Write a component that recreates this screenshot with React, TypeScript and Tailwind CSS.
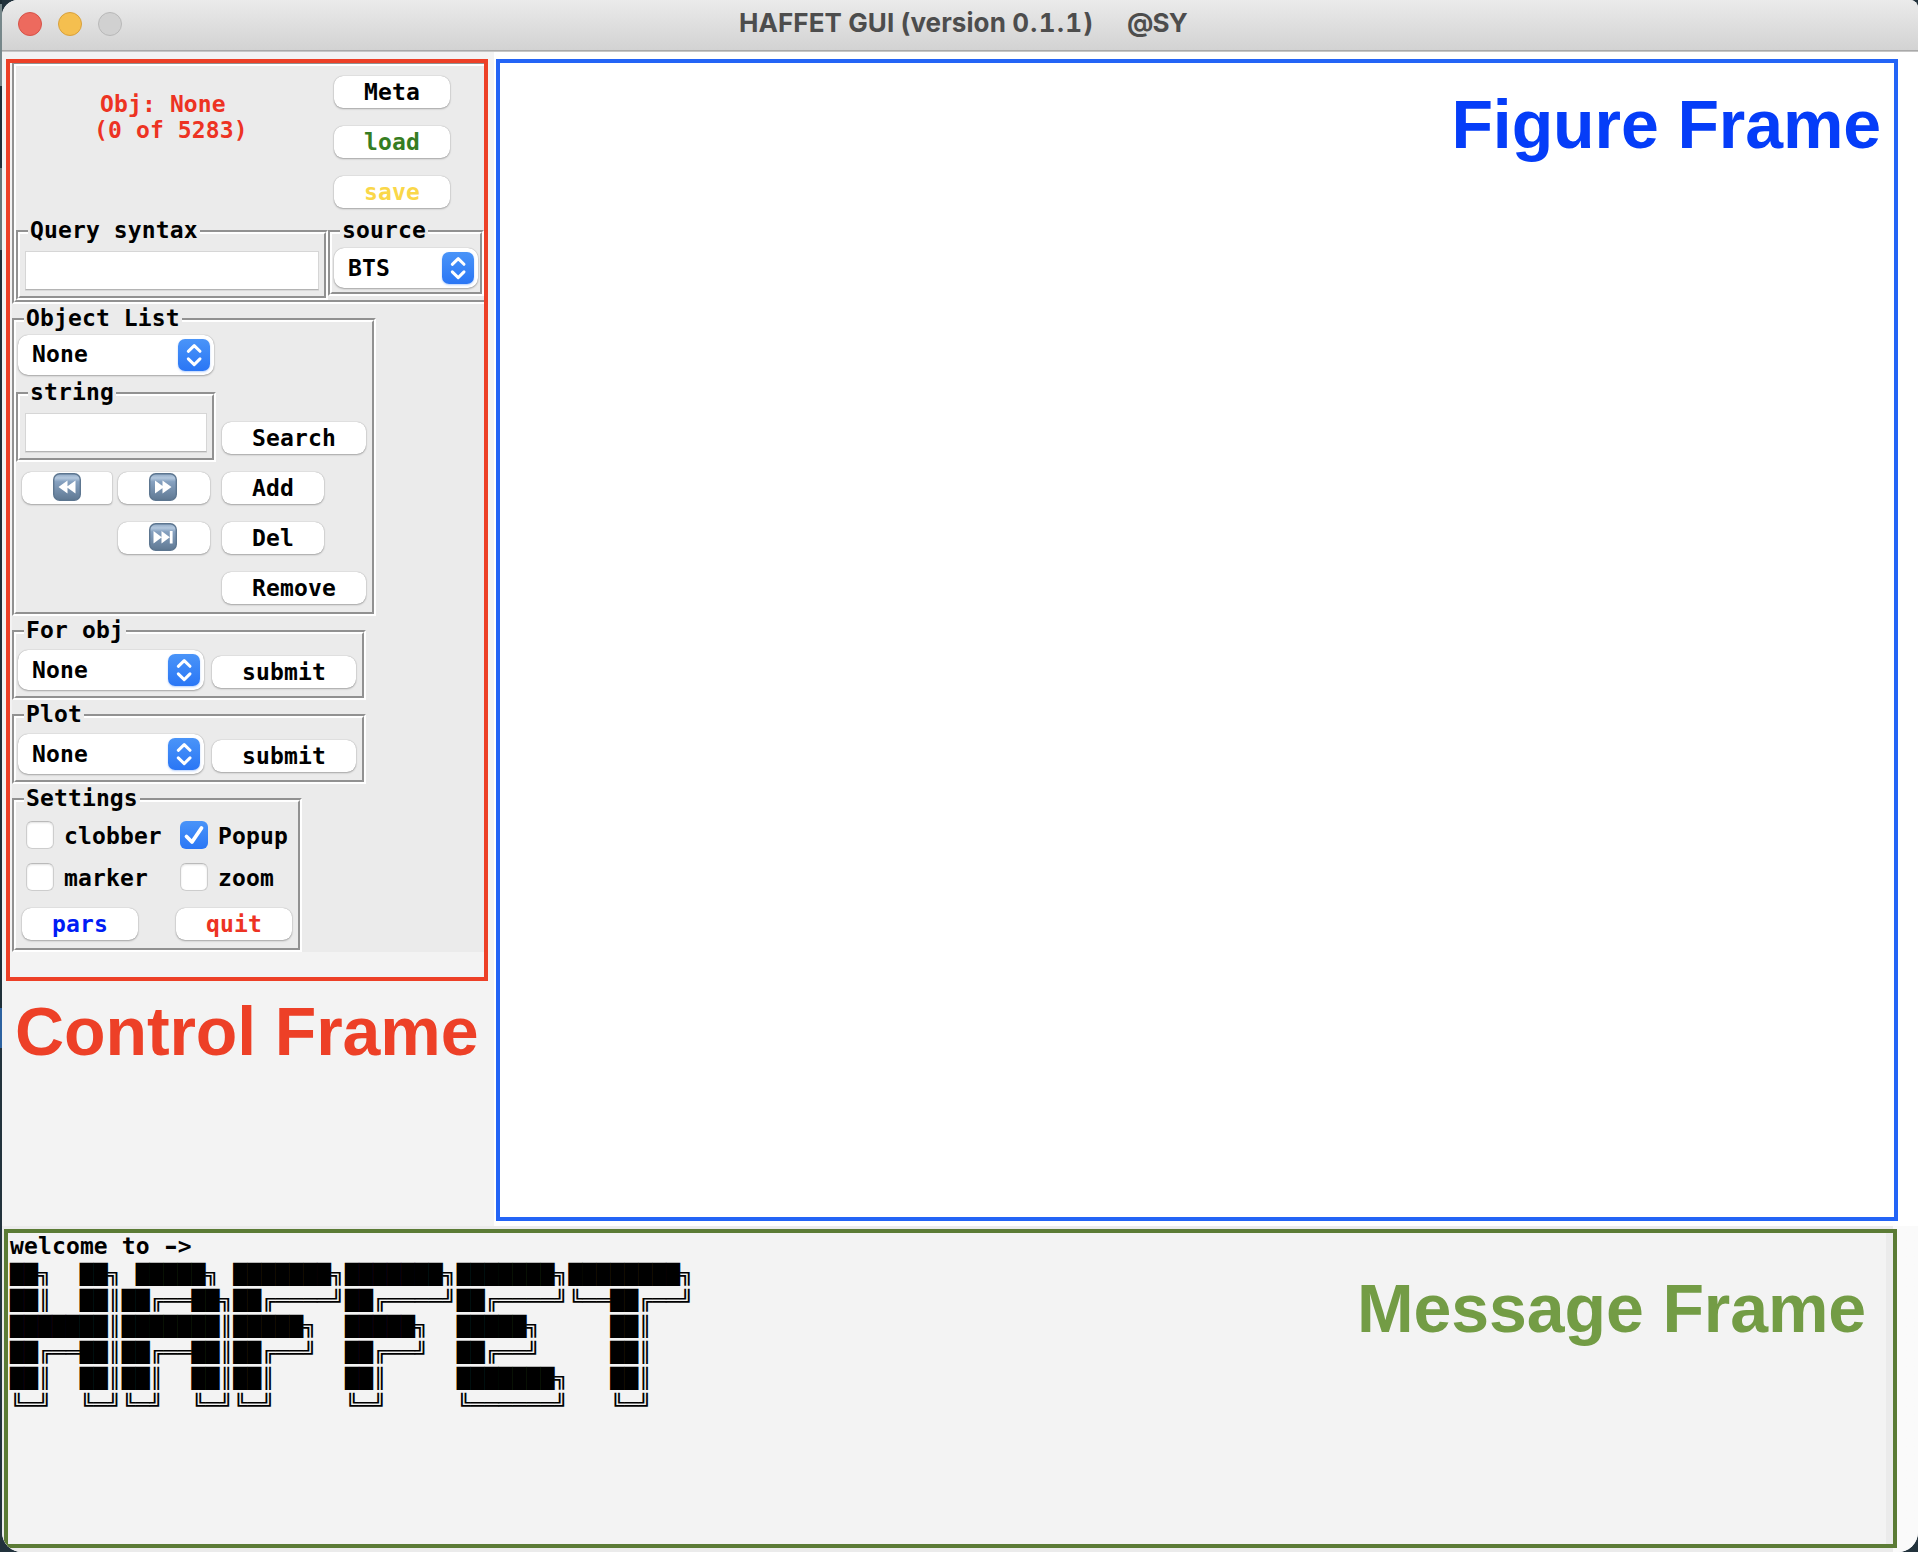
import type { ReactNode } from "react";

const LOGO = [
  "██╗  ██╗ █████╗ ███████╗███████╗███████╗████████╗",
  "██║  ██║██╔══██╗██╔════╝██╔════╝██╔════╝╚══██╔══╝",
  "███████║███████║█████╗  █████╗  █████╗     ██║",
  "██╔══██║██╔══██║██╔══╝  ██╔══╝  ██╔══╝     ██║",
  "██║  ██║██║  ██║██║     ██║     ███████╗   ██║",
  "╚═╝  ╚═╝╚═╝  ╚═╝╚═╝     ╚═╝     ╚══════╝   ╚═╝",
].join("\n");

/* Tk-style grooved frame: grey/white double line with an optional caption on the top edge. */
function Groove({ label, className = "", children }: { label?: string; className?: string; children?: ReactNode }) {
  return (
    <div className={`relative shrink-0 border-2 border-t-[#919191] border-l-[#919191] border-r-white border-b-white ${className}`}>
      <div className="h-full border-2 border-t-white border-l-white border-r-[#919191] border-b-[#919191]">{children}</div>
      {label && (
        <span className="absolute -top-[14px] left-[10px] h-[24px] bg-[#ebebeb] px-[2px] leading-[24px]">{label}</span>
      )}
    </div>
  );
}

function Btn({ className = "", children }: { className?: string; children?: ReactNode }) {
  return (
    <button
      className={`flex h-8 shrink-0 items-center justify-center rounded-[9px] bg-white shadow-[0_0_1px_rgba(0,0,0,0.35),0_1px_2px_rgba(0,0,0,0.28)] ${className}`}
    >
      {children}
    </button>
  );
}

function Select({ value, className = "" }: { value: string; className?: string }) {
  return (
    <div
      className={`flex h-10 shrink-0 items-center justify-between rounded-[10px] bg-white pr-1 pl-[14px] shadow-[0_0_1px_rgba(0,0,0,0.35),0_1px_2px_rgba(0,0,0,0.28)] ${className}`}
    >
      <span>{value}</span>
      <span className="h-8 w-8 rounded-[7px] bg-linear-to-b from-[#4a94f8] to-[#2a76f5] shadow-[0_1px_2px_rgba(42,118,245,0.35)]">
        <svg viewBox="0 0 32 32" className="h-8 w-8" fill="none" stroke="white" strokeWidth="3" strokeLinecap="round" strokeLinejoin="round">
          <path d="M10.3 12.3 L16.2 6.6 L22 12.3 M10.3 19.9 L16.2 25.6 L22 19.9" />
        </svg>
      </span>
    </div>
  );
}

function Entry({ className = "" }: { className?: string }) {
  return <div className={`h-[39px] border border-[#d6d6d6] border-b-[#b4b4b4] bg-white shadow-[0_1px_0_#d9d9d9] ${className}`} />;
}

function Check({ label, checked = false }: { label: string; checked?: boolean }) {
  return (
    <label className="flex h-[28px] items-center">
      {checked ? (
        <svg viewBox="0 0 28 28" className="h-7 w-7 rounded-[6px] bg-linear-to-b from-[#4a94f8] to-[#2a76f5]" fill="none" stroke="white" strokeWidth="3.8" strokeLinecap="round" strokeLinejoin="round">
          <path d="M6.5 15.5 L12 21 L21.5 7" />
        </svg>
      ) : (
        <span className="h-7 w-7 rounded-[6px] border border-[#cdcdcd] border-t-[#bababa] bg-white shadow-[inset_0_1px_2px_rgba(0,0,0,0.12)]" />
      )}
      <span className="mt-[3px] ml-[10px]">{label}</span>
    </label>
  );
}

/* Blue-grey media key glyph. */
function MediaKey({ kind }: { kind: "rewind" | "forward" | "next" }) {
  const paths = {
    rewind: "M14.5 7.5 V20.5 L5.5 14 Z M22.5 7.5 V20.5 L13.5 14 Z",
    forward: "M6 7.5 V20.5 L15 14 Z M13.5 7.5 V20.5 L22.5 14 Z",
    next: "M4.5 8 V20.5 L12.8 14.2 Z M12.5 8 V20.5 L20.8 14.2 Z M20.8 8 H23.6 V20.5 H20.8 Z",
  };
  return (
    <svg viewBox="0 0 28 28" className="-mt-[2px] h-7 w-7">
      <defs>
        <linearGradient id={`key-${kind}`} x1="0" y1="0" x2="0" y2="1">
          <stop offset="0" stopColor="#8fa9c6" />
          <stop offset="0.16" stopColor="#b4c8de" />
          <stop offset="0.3" stopColor="#86a1c0" />
          <stop offset="1" stopColor="#5f7892" />
        </linearGradient>
      </defs>
      <rect x="0.7" y="0.7" width="26.6" height="26.6" rx="6" fill={`url(#key-${kind})`} stroke="#5d7690" strokeWidth="1.4" />
      <path d={paths[kind]} fill="white" />
    </svg>
  );
}

function ControlFrame() {
  return (
    <div className="ml-[4px] h-[922px] w-[482px] shrink-0 overflow-hidden border-4 border-[#ed4027] pl-[2px]">
      <div className="flex h-[889px] w-[480px] flex-col items-start bg-[#ebebeb]">
        <Groove className="-mt-px h-[242px] w-[484px]">
          <div className="flex h-[164px]">
            <div className="w-[318px] pt-[25px] leading-[26px] text-[#ed3323]">
              <div className="pl-[84px]">Obj: None</div>
              <div className="pl-[78px]">(0 of 5283)</div>
            </div>
            <div className="flex flex-col gap-[18px] pt-[10px]">
              <Btn className="w-[116px]">Meta</Btn>
              <Btn className="w-[116px] text-[#367d22]">load</Btn>
              <Btn className="w-[116px] text-[#fad749]">save</Btn>
            </div>
          </div>
          <div className="flex items-start">
            <Groove label="Query syntax" className="h-[70px] w-[312px]">
              <Entry className="mt-[17px] ml-[5px] w-[294px]" />
            </Groove>
            <Groove label="source" className="h-[66px] w-[156px]">
              <Select value="BTS" className="mt-[14px] ml-[2px] w-[144px]" />
            </Groove>
          </div>
        </Groove>

        <Groove label="Object List" className="mt-[14px] h-[298px] w-[364px]">
          <div className="flex">
            <div className="w-[206px]">
              <Select value="None" className="mt-[13px] ml-[2px] w-[196px] pb-px" />
              <Groove label="string" className="mt-[17px] h-[70px] w-[200px]">
                <Entry className="mt-[17px] ml-[5px] w-[182px]" />
              </Groove>
              <div className="mt-[10px] flex gap-[6px] pl-[6px]">
                <Btn className="w-[90px] rounded-r-[4px]"><MediaKey kind="rewind" /></Btn>
                <Btn className="w-[92px] pr-[2px]"><MediaKey kind="forward" /></Btn>
              </div>
              <div className="mt-[18px] pl-[102px]">
                <Btn className="w-[92px] pr-[2px]"><MediaKey kind="next" /></Btn>
              </div>
            </div>
            <div className="flex flex-col gap-[18px] pt-[100px]">
              <Btn className="w-[144px]">Search</Btn>
              <Btn className="w-[102px]">Add</Btn>
              <Btn className="w-[102px]">Del</Btn>
              <Btn className="w-[144px]">Remove</Btn>
            </div>
          </div>
        </Groove>

        {["For obj", "Plot"].map((name) => (
          <Groove key={name} label={name} className="mt-[14px] h-[70px] w-[354px]">
            <div className="flex pl-[2px]">
              <Select value="None" className="mt-[16px] w-[186px]" />
              <Btn className="mt-[22px] ml-2 w-[144px]">submit</Btn>
            </div>
          </Groove>
        ))}

        <Groove label="Settings" className="mt-[14px] h-[154px] w-[290px]">
          <div className="grid grid-cols-[154px_1fr] gap-y-[14px] pt-[19px] pl-[10px]">
            <Check label="clobber" />
            <Check label="Popup" checked />
            <Check label="marker" />
            <Check label="zoom" />
          </div>
          <div className="mt-[17px] flex gap-[38px] pl-[6px]">
            <Btn className="w-[116px] text-[#001cf5]">pars</Btn>
            <Btn className="w-[116px] text-[#ed3323]">quit</Btn>
          </div>
        </Groove>
      </div>
    </div>
  );
}

export default function App() {
  return (
    <div className="flex h-[1552px] w-[1918px] overflow-hidden bg-[#22323c] font-['DejaVu_Sans_Mono',monospace] text-[23px] font-bold tracking-[0.13px] text-black">
      {/* Sliver of the desktop behind the window */}
      <div className="flex w-[2px] shrink-0 flex-col">
        <div className="h-1 bg-[#1c2b33]" />
        <div className="h-[82px] bg-[#76878a]" />
        <div className="h-[82px] bg-[#1f3039]" />
        <div className="h-[82px] bg-[#66787b]" />
        <div className="h-[758px] bg-[#1f3039]" />
        <div className="h-10 bg-[#2c62a0]" />
        <div className="flex-1 bg-[#22323c]" />
      </div>

      <div className="flex w-[1916px] flex-col overflow-hidden rounded-tl-[16px] rounded-tr-[8px] rounded-b-[20px] bg-white">
        <header className="flex h-[52px] shrink-0 items-start border-b border-[#c6c6c6] bg-linear-to-b from-[#ebebeb] to-[#d2d2d2]">
          <div className="flex h-[51px] w-full border-b border-[#a9a9a9]">
            <div className="flex w-[737px] gap-4 pt-3 pl-4">
              <span className="h-6 w-6 rounded-full border border-[#d65248] bg-[#ed6a5e]" />
              <span className="h-6 w-6 rounded-full border border-[#d8a03c] bg-[#f5bf4f]" />
              <span className="h-6 w-6 rounded-full border border-[#b8b8b8] bg-[#d1d1d1]" />
            </div>
            <h1 className="flex pt-[7px] font-[Inter,sans-serif] text-[26px] leading-8 font-bold tracking-[0.08px] text-[#4d4d4d]">
              <span className="w-[388px] whitespace-nowrap">
                HAFFET GUI (version <span className="tracking-[1.4px] tabular-nums">0.1.1</span>)
              </span>
              <span className="tracking-[-0.9px]">@SY</span>
            </h1>
          </div>
        </header>

        <main className="flex h-[1174px] shrink-0">
          <section className="w-[492px] shrink-0 bg-[#f3f3f3] pt-[7px]">
            <ControlFrame />
            <h2 className="mt-[11px] ml-[13px] font-['Liberation_Sans',Arial,sans-serif] text-[68px] leading-[78px] font-bold tracking-[-0.1px] whitespace-nowrap text-[#ed4027]">
              Control Frame
            </h2>
          </section>
          <section className="mt-[7px] ml-[2px] h-[1162px] w-[1402px] border-4 border-[#2364f6]">
            <h2 className="mt-[22px] mr-[13px] text-right font-['Liberation_Sans',Arial,sans-serif] text-[68px] leading-[78px] font-bold tracking-[-0.1px] text-[#053df8]">
              Figure Frame
            </h2>
          </section>
        </main>

        <footer className="flex h-[326px] shrink-0 bg-linear-to-r from-[#ebebeb] from-[1891px] to-[#fafafa] to-[1891px] pt-[3px] pl-[2px]">
          <section className="h-[319px] w-[1893px] border-4 border-[#5b7b35] bg-[#ebebeb]">
            <div className="flex h-full w-[1878px] justify-between bg-[#f3f3f3] pl-[2px]">
              <div>
                <p className="leading-[26px]">
                  welcome to <span className="inline-block scale-x-[1.4]">-</span>&gt;
                </p>
                <pre className="mt-[2px] origin-top-left scale-y-[0.84] font-['DejaVu_Sans_Mono',monospace] text-[23.2px] leading-[31px] font-bold tracking-normal">
                  {LOGO}
                </pre>
              </div>
              <h2 className="mt-[36px] mr-[20px] font-['Liberation_Sans',Arial,sans-serif] text-[68px] leading-[78px] font-bold tracking-[-0.1px] text-[#739c45]">
                Message Frame
              </h2>
            </div>
          </section>
        </footer>
      </div>
    </div>
  );
}
